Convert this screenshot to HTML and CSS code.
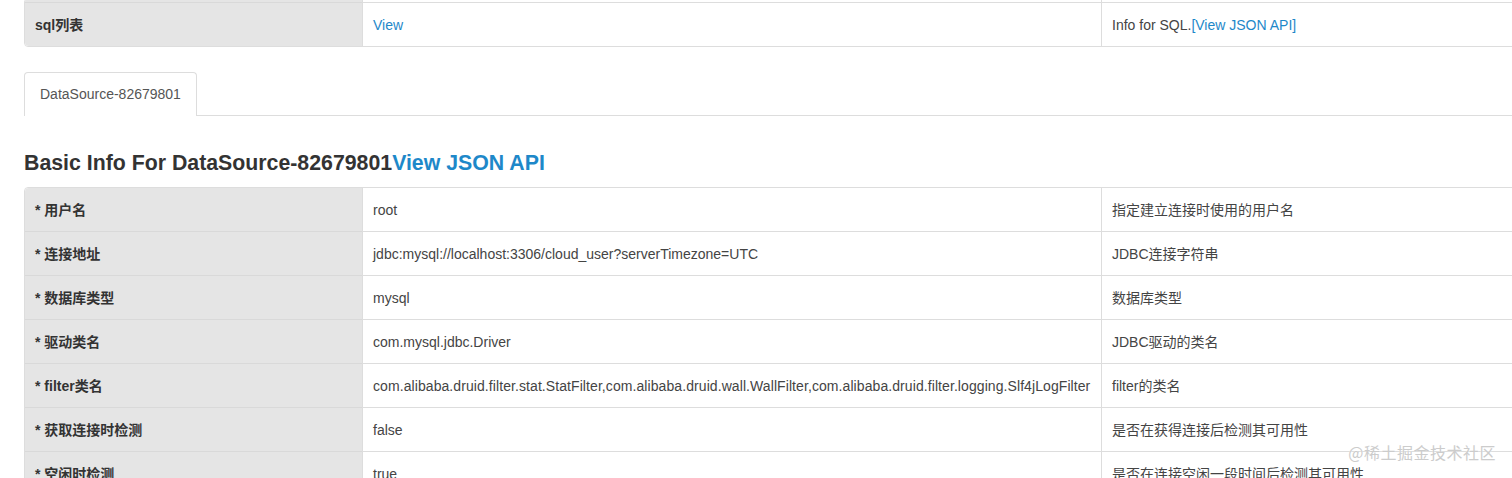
FILE: index.html
```html
<!DOCTYPE html>
<html lang="zh-CN">
<head>
<meta charset="utf-8">
<title>Druid DataSource</title>
<link rel="stylesheet" href="styles.css">
</head>
<body>
<div class="page">
  <table class="info top">
    <colgroup><col class="c1"><col class="c2"><col class="c3"></colgroup>
    <tr class="spacer"><th></th><td></td><td></td></tr>
    <tr><th>sql列表</th><td><a href="#">View</a></td><td>Info for SQL.<a href="#">[View JSON API]</a></td></tr>
  </table>

  <ul class="tabs">
    <li class="tab active">DataSource-82679801</li>
  </ul>

  <h3 class="title">Basic Info For DataSource-82679801<a href="#">View JSON API</a></h3>

  <table class="info">
    <colgroup><col class="c1"><col class="c2"><col class="c3"></colgroup>
    <tr><th>* 用户名</th><td>root</td><td>指定建立连接时使用的用户名</td></tr>
    <tr><th>* 连接地址</th><td>jdbc:mysql://localhost:3306/cloud_user?serverTimezone=UTC</td><td>JDBC连接字符串</td></tr>
    <tr><th>* 数据库类型</th><td>mysql</td><td>数据库类型</td></tr>
    <tr><th>* 驱动类名</th><td>com.mysql.jdbc.Driver</td><td>JDBC驱动的类名</td></tr>
    <tr><th>* filter类名</th><td class="long">com.alibaba.druid.filter.stat.StatFilter,com.alibaba.druid.wall.WallFilter,com.alibaba.druid.filter.logging.Slf4jLogFilter</td><td>filter的类名</td></tr>
    <tr><th>* 获取连接时检测</th><td>false</td><td>是否在获得连接后检测其可用性</td></tr>
    <tr><th>* 空闲时检测</th><td>true</td><td>是否在连接空闲一段时间后检测其可用性</td></tr>
  </table>
</div>
<div class="watermark">@稀土掘金技术社区</div>
</body>
</html>
```
FILE: styles.css
```css
html, body {
  margin: 0;
  padding: 0;
  background: #fff;
  overflow: hidden;
}
body {
  font-family: "Liberation Sans", Arial, "Noto Sans CJK SC", sans-serif;
  font-size: 14px;
  line-height: 20px;
  color: #333;
  width: 1512px;
  height: 478px;
  position: relative;
}
.page {
  padding-left: 24px;
  margin-top: -2px;
}
a {
  color: #1e88c9;
  text-decoration: none;
}
.info {
  width: 1540px;
  border-collapse: separate;
  border-spacing: 0;
  border: 1px solid #ddd;
  border-radius: 4px;
  table-layout: fixed;
}
.info .c1 { width: 337px; }
.info .c2 { width: 739px; }
.info th,
.info td {
  padding: 12px 10px 11px 10px;
  text-align: left;
  vertical-align: top;
  border-top: 1px solid #ddd;
  white-space: nowrap;
}
.info tr:first-child th,
.info tr:first-child td {
  border-top: none;
}
.info th {
  background: #e5e5e5;
  font-weight: bold;
  color: #333;
  border-top-color: #d9d9d9;
}
.info td {
  border-left: 1px solid #ddd;
  color: #444;
}
.info tr:first-child th { border-top-left-radius: 4px; }
.info tr:last-child th { border-bottom-left-radius: 4px; }
.info .spacer th,
.info .spacer td {
  padding: 0;
  height: 3px;
}
.info td.long {
  letter-spacing: 0.08px;
}
.top {
  margin-bottom: 25px;
}
.tabs {
  list-style: none;
  margin: 0;
  padding: 0;
  display: flex;
  border-bottom: 1px solid #ddd;
}
.tab {
  padding: 11px 15px 12px 15px;
  border: 1px solid #ddd;
  border-bottom: none;
  border-radius: 4px 4px 0 0;
  color: #555;
  background: #fff;
  margin-bottom: -1px;
}
.title {
  font-size: 21.3px;
  font-weight: bold;
  line-height: 24px;
  margin: 35px 0 12px 0;
  color: #333;
}
.watermark {
  position: absolute;
  right: 16px;
  bottom: 16px;
  font-family: "Noto Sans CJK SC", sans-serif;
  font-size: 16px;
  line-height: 20px;
  letter-spacing: 0.5px;
  color: #cccccc;
  text-shadow: 0 0 1px rgba(255, 255, 255, 0.9);
}
```
